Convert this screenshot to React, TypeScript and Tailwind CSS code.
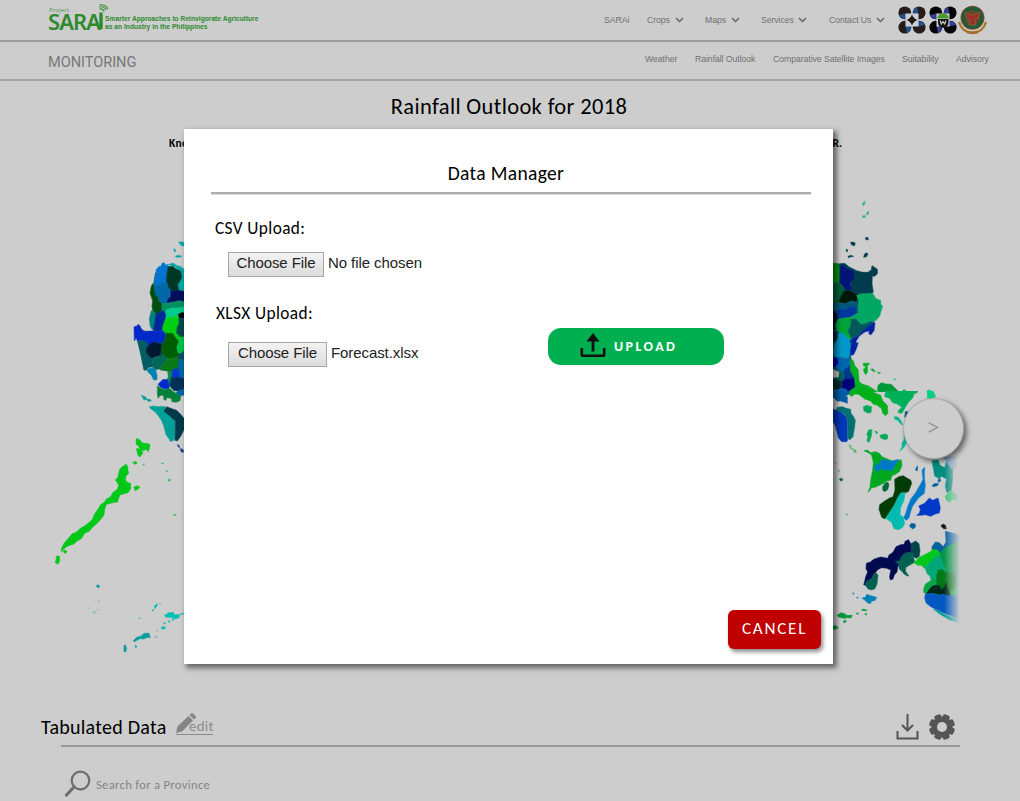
import type { ReactNode } from "react";

type Shape = [fill: string, d: string];

const navItems: { label: string; width: string; chevron: string }[] = [
  { label: "SARAi", width: "w-[43px]", chevron: "" },
  { label: "Crops", width: "w-[58px]", chevron: "w-[36px]" },
  { label: "Maps", width: "w-[56px]", chevron: "w-[34px]" },
  { label: "Services", width: "w-[68px]", chevron: "w-[45px]" },
  { label: "Contact Us", width: "w-[69px]", chevron: "w-[55px]" },
];

const subItems: { label: string; width: string }[] = [
  { label: "Weather", width: "w-[50px]" },
  { label: "Rainfall Outlook", width: "w-[78px]" },
  { label: "Comparative Satellite Images", width: "w-[129px]" },
  { label: "Suitability", width: "w-[54px]" },
  { label: "Advisory", width: "w-[63px]" },
];

const westNorth: Shape[] = [
  ["#06505c", "M366 76L384 78 434 96V466L410 452 396 411 386 392 362 390 344 378 312 386 296 310 286 270 340 276 338 214 346 200 338 150 346 100z"],
  ["#00a8a8", "M416 7l8-2 12 5v8l-12-1zM402 26l5 3-1 7-4-3zM406 49l8-3 10 2v3l-15 1zM383 74l16-5 12 8 10 2 13 10v64l-18-2-4-16 14-22-3-18-14-12-8-4-12-4z"],
  ["#0074d0", "M366 70l7-2 3 7 7-1 -1 34-2 18-10 8-14 4-14-2 3-24 4-12-1-10 8-10 8-2z"],
  ["#003828", "M384 82l14-4 8 8 16 8 3 20-12 20 3 16-16 4-12 6-8-14-2-22 2-20z"],
  ["#0068a8", "M342 136l14 0 10-8 14-2 4 14 8 12v20l-10 8-2 12-16-2-10-8-2-12-10-6z"],
  ["#000f5c", "M392 154l22-4 22 6v30l-20-2-18 6-18 2 4-14 8-8z"],
  ["#004d10", "M340 130l3 22 2 12 8 6 2 12 12 10 1 22-10 6-9 10-8-6-5-24 2-18-8-22 4-22z"],
  ["#009060", "M366 190l14 0 20-4 18-4 18 4v20l-24 4-18-2-12 8-10 2-6-6z"],
  ["#00cc88", "M378 210l16-6 18 0 22-4v20l-18 0-2 14-16 0-8 6-12 4-2-10z"],
  ["#00000c", "M414 224l10-6h12v18l-16-2z"],
  ["#008078", "M334 212l10 4 4 14-2 14-2 28-10-6-4-10-2-20z"],
  ["#002898", "M346 228l10-12 16-4 5 14-3 16-8 16 2 16-14 0-14-4 4-20z"],
  ["#00d010", "M376 238l12-6 26-3 4 18-5 14-2 18 14 14-2 12-18-8-6-14-18-2-16 0 4-22z"],
  ["#004a48", "M416 236l20-1v58l-14-1-12-12 1-18 6-10z"],
  ["#0028c8", "M282 260l8-1 4-6 6 4 3 8 8 8-2 4 20-4 16 0 22-2 8 8 3 12-6 14-16 5-13-3-12 9-9 6-8-10-18-4-8-13-5 8z"],
  ["#005c60", "M292 303l10-2 18 4 2 11-2 16 8 18 12 6-4 14-12 4-2 16-10 1-4-20-6-30-5-20z"],
  ["#001830", "M328 314l12-8 12 2 14 6-2 20-6 14-18 6-10-2-12-16 2-12z"],
  ["#005c00", "M378 280h20l8 12 10 12 0 30-4 20-12 4-16 0-12-10-8-12 2-18 8-16z"],
  ["#00c040", "M420 292l16-2v38l-14 12-8-2-4-16 6-16z"],
  ["#006858", "M342 352l16-4 14-1 12 9-10 14-12 14-14 6-10-8-2-14z"],
  ["#087818", "M382 356l18-3 14 0 0 26-12 10-8 8-34-10 12-18z"],
  ["#0080b0", "M324 386l14-3 8 4 5 18 0 14-10 1-8-16-10-8z"],
  ["#009040", "M383 396l11 1 2 20-9 16-7-8 5-16z"],
  ["#0068a0", "M420 357l14 5v58l-15-8-3-30z"],
  ["#0038d0", "M397 392l8-7 14 7 0 20-14 5-10-5z"],
  ["#0028d0", "M354 433l14-14 14-1 6 15-1 12-12 3-14-7z"],
  ["#003058", "M394 411l14 2 10-2 16 6v38l-18-3-14 0-14-15z"],
  ["#0064a8", "M406 460l10-8 18-6v18l-16 5z"],
  ["#008038", "M352 438l10 5 12 7 14-6 10 10 10 6 14 8-2 14-12 5-12-2-2-10-14-2-2 8-6-2-2-14-10 2-6 8-2-16z"],
  ["#00a098", "M304 465l14 7 4 6 8 0 4 4-8 3-8-7-6 2zM328 500l14-2 14 2 18-1 8 14 24 20-1 50-3 19-14-4-10-14-6-24-8-20-16-22-16-12zM388 600l10-2-4 8z"],
  ["#003848", "M372 514l8-14 18 7 12 4 12 12 10 12v34l-10 20-10 14-7-2 1-58-20-18z"],
  ["#203c88", "M412 614l5 1 2 8-4-2zM420 626l8 1 4 9-7 1z"],
  ["#00c818", "M289 596l8 2 8 10 10 4 8-2 6 4-2 10-7-4-8 3-10 4-6-9-8-5zM290 626l12 2 6 10-8 12-7-6z"],
];

const westSouth: Shape[] = [
  ["#00c818", "M290 26l8 3 8 10 12 2 11 4-1 10-3 10-7-7-8 4-10-6-5-12-5-8zM290 57l12 0 6 14-10 10-3-10zM278 98l10-4 3 6-7 3zM258 102l5 8 1 12 2 8-8 8-2 12 8 8 8 2 0 16-8 12-12 3-12 4-4 10-4 12-8 0-12 3-12 3-4 8-2 8-2 16-12 16-10 10-14 12-8 11-14 6-10 16-14 8-8 8-12 4-10 4-10 8-6 9 0-11 8-16 14-16 10-12 14-6 12-12 12-6 12-10 10-8 8-18 12-18 6-10 12-8 4-8 14-8 6-12 14-10 4-12-4-8-6-8 8-8 2-12 4-14zM282 171l10-4 8 5-7 6-8 4zM74 360l7 4-5 7-7-7zM50 378l8 0 1 14-5 11-8-5z"],
  ["#44bd54", "M384 149l5-3 3 4-3 4-5-2zM364 100l8-1-3 3zM377 121l6 2-2 3zM401 253l5-1 3 3-7 2zM308 103l6-2-2 5z"],
  ["#009ca0", "M168 468l6-4 5 4-3 6zM280 632l10-10 14-4 8-8 15 0 4 13-8-1-12 5-12-1-10 6-6 4zM252 646l4-1 4 10-3 11-5-1zM285 646l5 2-2 6z"],
  ["#00c0b4", "M374 556l12-8 14-1 4 8 15-2-2 10-12 4-10-5-18 0zM343 528l8-7 1 6-8 9zM370 579l8-1-4 4zM385 572l5 2-2 5zM364 592l8-3 5 5-5 4-8-2zM394 568l8 0-2 4zM336 540l6-1-3 5zM420 553l10-4v4z"],
  ["#7fbfc0", "M357 520l6 2-3 3zM294 566l5-4 4 2-4 3zM160 545l6 0 0 4-7 0zM144 535l3-3v4zM172 538l4 1-3 3zM175 510l4 2-3 3zM344 620l10-2-5 6zM350 600l4 2-3 4z"],
];

const eastNorth: Shape[] = [
  ["#005060", "M38 222H56L100 244 154 252 156 312 180 350 160 394 100 446 92 500 106 560 112 590 94 608 62 604 58 566 64 548 38 536z"],
  ["#30b878", "M127 42l4-6 5-2-2 8-4 6zM139 73l3-8 5 0-3 10zM127 78l8-2 2 5-8 2z"],
  ["#003c4c", "M92 157l8-1 6 4-3 8-9-4zM136 143l8-1 1 7-7 1zM79 177l4 2-1 7-4-3zM84 199l8-3 9 3-10 2-6 2zM131 202l2-9 6-5 5 4-4 8zM58 221l16-1 14 11 22 11 18 5 16 0 10-8 2-12 8 5 8 6 1 12-8 9-8-1-1 24 4 24-10 6-24 0-16 2-14-8-10-8 10-14-8-24z"],
  ["#009800", "M38 220l14 0 4 8 3 16-2 34-19 4z"],
  ["#001478", "M60 228l10-2 10 10 20 7 2 20-13 21 8 12-8 5-14-3-6-12-10-9 0-18z"],
  ["#006038", "M38 280l18-2 10 10 8 12-6 18-12 18-18 4z"],
  ["#001808", "M72 302l14-2 14 8 16 7-4 15-10 8-16 0-12 3-18-5 6-16z"],
  ["#00a864", "M110 316l14-5 14 0 20-1 10 16 14 5 1 14 5 3-5 16-4 14-12 14-16 2-12 8-12 4-10-10-9-9-20-3 10-9 16-5 0-20 2-16z"],
  ["#005878", "M48 340l16-1 12 2 18-9 14 4 1 14-18 2-14 8-20-1-16 0z"],
  ["#0038a0", "M54 358l18 0 18-7 18-1 1 16-4 7-13 6-8 6-16 1-14 2-2-18z"],
  ["#001030", "M38 362l8 2 6 14 0 30-6 12-8-2z"],
  ["#00a438", "M54 388l20-4 18-2 8 4-8 22-4 14 2 14 8 12-12 2-12-12-12-6-12-12-4-16z"],
  ["#005858", "M94 387l14 1 14 16 14-3 14-5 12 2-12 12-12 8-14 10-14 12-16 5-6-15-4-8 8-14z"],
  ["#0020a0", "M148 407l14-12 3 5-3 22-10 13-6-5 2-8-14 4-16 12-10 16 2 6 5-2-6 18-8 18-10 2 0-20 6-16-7-7 10-8 14-8 20-20z"],
  ["#002038", "M38 424l12 4 4 16-8 11-8-3z"],
  ["#0098cc", "M54 430l16 0 8 12 10 4 3 20-3 34-10 6-8-2-10-2-14 0-6-12 2-18 6-16 6-12z"],
  ["#0000b8", "M38 502l16 3 4 13-8 11-12 3z"],
  ["#0068b0", "M54 502l14 0 10 4 10-2 2 18-10 14-10 10-16-4-6-12 8-10z"],
  ["#003890", "M70 542l8-8 10-4 4 14 6 24-10 3-16-5z"],
  ["#006058", "M58 544l10 0 4 14-4 20-16-4-12-6v-4l16-2z"],
  ["#002828", "M38 566l14 4 12 4-2 22-10 7-14-4z"],
  ["#000078", "M66 574l10-8 12 2 12-4 12 14 4 14-14 9-14 12-10-15-12-2z"],
  ["#0060b0", "M40 600l14 0 10-5 14 3 10 12 10 5-2 18-12 5-8 0-8-12-10 0-2 10-16-6z"],
  ["#00b020", "M92 506l8 6 4 14 10 12 2 14 1 22 9 8 16 5 14 8 12 8 10 4 8 16 10 18 5 19h-14l-5-16-12-14-16-7-14-5-14-10-10-3-10 3-8 7-14-1-6-3 14-10 14-10-3-28-12-22zM130 520l16-1 3 4-7 2 1 20-6 9-4-6-3-10 8-8-8-3zM152 538l6-2 8 8-5 1zM172 547l10 1-5 3zM136 588l8-1 8 6 13 9 7 7-7 2-10-8-10-8zM130 648l10-4 15 4-2 12h-22z"],
  ["#00b050", "M182 604l14-1 14 1 10 8 16 5 10-6 4-12 6 1 4 12 14 0 8-5 18 2-10 7 12 4 18 2 4 14-10 6-26 4-16 14h-36l-6-14-14-10-10-4-8-14-12-6z"],
  ["#009838", "M174 586l10-8 14 4 16 1 12 12 8 8 3 12-9-1-10-7-18-5-20 6-8-8z"],
  ["#00d084", "M322 602l6-3 9 7 8 12 2 7-24 1zM221 569l4-3 2 4z"],
  ["#007070", "M40 652l10-2 14 4 16 0 2 6H38z"],
];

const eastSouth: Shape[] = [
  ["#00a838", "M336 486L400 470H434V670L400 676 320 640 318 600 336 576z"],
  ["#00b018", "M84 8l12-8h40l14 2 18 8 14 6 6 16 14 14 2 24-8 7-8-8-4-14-14-10-10-2-8-10-18-6-18-14-12-1-10 8z"],
  ["#00a858", "M130 50l10-4 15 4-2 18-10 1-11-6zM146 120l10-1-2 20-7 18-6-4 3-14-4-5zM165 123l8 3-3 6zM180 136l14-4 8 2 2 11-8 4-14-5z"],
  ["#005ca0", "M38 8l14-8h38l-2 12-12 6 6 2 0 20-20-7-10 1-10-11-6 2z"],
  ["#0038b8", "M46 60l12 1 10 8 14 16 1 60-2 10-16 0-10-12-4-16-6-22-6-10v-38z"],
  ["#007070", "M52 52l16-2 8 4 16 4 1 12 8 10 5 12-3 24-4 24-10 10-6-6 0-56-12-18-22-10z"],
  ["#00b058", "M196 8l12-8h86l-2 8-10 4-4 12-14 14-8 14-10 18-12-2 2-8 10-8-14-10-14-4-10-14-14-4z"],
  ["#00d084", "M322 2l16-2 9 20-17 6-8-2z"],
  ["#005878", "M256 64l12 2 6 16-20 0z"],
  ["#00b898", "M222 80l12 1 8 10 6 14-5-2-10-12-8-3zM252 122l6 30 0 10-6 10-12 12 6-14 0-12 6-8z"],
  ["#55b96a", "M88 164l6 4-2 5 8 4 8 4 1 6-5 2-4-9-10-6zM44 218l5 1-2 3zM54 240l5 2-3 4zM76 372l8 1-2 3z"],
  ["#006838", "M58 268l4-4 7 4-3 5-5-1z"],
  ["#00a820", "M132 182l10-2 10 8 14-3 12 5 8 10 14 6 20 8 10-1 14-4 2 18-8 18-12 8-10 4-4 14-12 2-12 8-20 10-14 3-6 10-4 2 6-14 2-22 6-30 2-24-6-22-8-5z"],
  ["#0078c8", "M164 228l12-6 8-12 16-1 10 6 14-4 13-3-9 14-6 8-6 12-12-2-14 0-6-6-10 10-10-5zM306 240l8-8-1 30 3 24-3 24-18 14-8 12-10 14-6 18-4 15-8 8-8-7 7-16 5-18 10-24 14-18 16-28 6-12z"],
  ["#006838", "M188 290l8-12 8-1 3 8-4 14-10 6-5-5z"],
  ["#003c04", "M224 268l12-8 14-3 12 8 10 5 3 10-9 24-12 6-14 8-12 20-10 16-12 18-11 15-10-5-8-24 2-14 14-10 14-9 12-5 6-20z"],
  ["#00bcb0", "M242 309l13-2-3 24-10 22-2 22 10 6 4 20-6 11-12 7-14-3-7-19-10-6-8-6 12-18 14-22 10-22z"],
  ["#0038c8", "M290 376l8-6 3-12-5-10 18-8 14-16 10 7 16-7 2 7 5 22-3 16-12 3-14 7-16-5-12 2z"],
  ["#0060a0", "M268 408l6-8 12 2 0 10-8 5zM336 287l6-6 10-1 4 3-6 5-10 2zM354 271l5-7 3 8-6 6zM286 240l4-10 3-2-1 14z"],
  ["#008c80", "M336 212l18-2 6 16 14 7 4-16 20-8v56l-4 38-14 4-4-20 4-20-16-8-6 7-14-8z"],
  ["#40c878", "M376 318l18-19 6 10 14 8-4 18-8-8-8 4-6 6-10-8z"],
  ["#80a0c8", "M370 200h40l-1 34-16 2-14-22z"],
  ["#181820", "M364 405l7-3 7 6 1 9-8-1-7-6z"],
  ["#000850", "M228 470l14-6 10-1 4-10 10-4 5 10 7 6-3 20 8 16-12 0-16 9-14 10-8 12-2 14-8 9-4 12-8 3-2-8 1-11 3-10-12-6-16-2-12 6-12 16-6 18-8 8-8 6-8-3 4-14 2-10 6-14-5-10 1-16 12-4 10-8 20-7 14 2 8 2 4-10 12-8z"],
  ["#004448", "M273 461l14-8 10 8 3 20-2 18-8 6-10-5-6-18z"],
  ["#006050", "M226 516l12-4 8-15 12-9 16-1 6 12 4 18-16 9-10 6-2 10 10 16-4 0-10-6-6-8-8-6-2-16zM142 572l12-6 8-14 7-3 5 7-3 26-6 14-10 4-12-4-8-14z"],
  ["#0080b8", "M126 624l10-2 4-9 12 4 18 5-5 10-10 1-4 8-8-2-8-8zM98 609l4 0-2 5zM110 622l5 0-2 4z"],
  ["#009838", "M51 676l12-8 12 3 4 5 18 0-4 8-12-1-8 2-16-3zM108 671l6-3 1 5zM38 710l8-4 9 7-8 5-9 0zM70 693l6-3 3 5-7 4zM124 661l6-4 12 4-8 1zM134 672l6-2-2 6z"],
  ["#0060a0", "M336 470l10-14 12 2 12 12 8-14-2-32 18 4 26 8v52l-44 8-20-4-20-8z"],
  ["#009848", "M360 492l10-14 22-14 28-8v120l-24-14-20-16-12-24z"],
  ["#00c818", "M282 518l16-16 16-8 16-8 8-8 14 2 8 9-3 8-14 8-14 20-16 10-8-9-12 0z"],
  ["#00a878", "M314 530l16-12 12-14 16-8 6 14 12 26-2 14-14-7-10 2-2 16 2 18-8 5-8-10-4-16-8-6z"],
  ["#007818", "M348 564l6-24 10-2 10 6 14 4 20 8v36l-16 12-14 6-10-14-16 0-12 4 10-14z"],
  ["#002818", "M318 602l14-12 14-5 14 3 4 10 10-8 4-14 6 20 8 20-8 7-8-4-6-4-8 0-22-5-20 6z"],
  ["#00a840", "M310 600l6-18 16-10 16-4-4 12-10 8-6 8-10 14-6-2z"],
  ["#0058c0", "M316 612l20-2 22 6 10-4 12 4 20 2 20-4v68l-14 0-28-10-26-12-20-10-14-12-4-14z"],
  ["#00a0a0", "M340 658l16 4 20 12 20 8 20 2v14l-26-8-28-16z"],
];

function Region({ shapes, x, y }: { shapes: Shape[]; x: number; y: number }) {
  return (
    <g transform={`translate(${x} ${y}) scale(0.333333)`} strokeLinejoin="round">
      {shapes.map(([fill, d], i) => (
        <path key={i} fill={fill} stroke={fill} strokeWidth="1.600" d={d} />
      ))}
      <g fill="none" stroke="#9ab" strokeOpacity="0.2" strokeWidth="1">
        {shapes.slice(1).map(([, d], i) => (
          <path key={i} d={d} />
        ))}
      </g>
    </g>
  );
}

function RainfallMap() {
  return (
    <svg className="block h-[500px] w-full" viewBox="0 170 1020 500" aria-hidden="true">
      <defs>
        <linearGradient id="fade" x1="0" x2="1" y1="0" y2="0">
          <stop offset="0" stopColor="#cdcdcd" stopOpacity="0" />
          <stop offset="1" stopColor="#cdcdcd" />
        </linearGradient>
        <clipPath id="upper">
          <rect x="0" y="170" width="1020" height="222" />
        </clipPath>
        <clipPath id="lower">
          <rect x="0" y="391" width="1020" height="300" />
        </clipPath>
      </defs>
      <Region shapes={westNorth} x={40} y={240} />
      <Region shapes={westSouth} x={40} y={430} />
      <g clipPath="url(#upper)">
        <Region shapes={eastNorth} x={820} y={190} />
      </g>
      <g clipPath="url(#lower)">
        <Region shapes={eastSouth} x={820} y={390} />
      </g>
      <rect x="944" y="450" width="16" height="180" fill="url(#fade)" />
      <rect x="959.500" y="450" width="30" height="180" fill="#cdcdcd" />
    </svg>
  );
}

function Chevron() {
  return (
    <svg className="h-[6px] w-[9px]" viewBox="0 0 9 6" fill="none" stroke="#666" strokeWidth="1.500">
      <path d="M1 1l3.500 3.500L8 1" />
    </svg>
  );
}

function Petals({ dark, blue, children }: { dark: string; blue: string; children: ReactNode }) {
  return (
    <svg className="h-[28px] w-[28px]" viewBox="0 0 28 28">
      {[0, 90, 180, 270].map((angle) => (
        <g key={angle} transform={`rotate(${angle} 14 14)`}>
          <circle cx="6.800" cy="6.800" r="6.400" fill={dark} />
          <path d="M.8 9A6.400 6.400 0 0011.500 11.200L8 7.500z" fill={blue} />
        </g>
      ))}
      <path fill="#cdd0d2" d="M7.500 7.500h13v13h-13z" />
      {children}
    </svg>
  );
}

function Logos() {
  return (
    <div className="flex h-[30px] items-center">
      <Petals dark="#251c1b" blue="#254f8c">
        <path fill="#201a1a" d="M14 8.500l1.800 3.700 3.700 1.800-3.700 1.800L14 19.500l-1.800-3.700L8.500 14l3.700-1.800z" />
        <circle cx="14" cy="14" r="3" fill="#201a1a" />
      </Petals>
      <div className="ml-[3px] flex">
        <Petals dark="#050508" blue="#343c94">
          <path fill="#151515" d="M9 13h10.500v3.500a5 5 0 01-10.500 0z" />
          <path fill="#4d9a2b" d="M8 12.500C8.500 9 11 7.200 14 7.200s5.500 1.800 6 5.300z" />
          <path d="M11 14.500l1.300 3.500 1.700-2.500 1.700 2.500 1.300-3.500" fill="none" stroke="#ccc" strokeWidth="1.200" />
        </Petals>
      </div>
      <svg className="h-[30px] w-[31px]" viewBox="0 0 31 30">
        <path d="M2 17c2 7 7 10.500 13.500 10.500S27 24 29 17" fill="none" stroke="#a27a28" strokeWidth="2.300" />
        <path d="M4 15c2 7 6 9 11.500 9S25 22 27 15" fill="none" stroke="#d0cdc4" strokeWidth="2" />
        <path d="M10 27.300l5.500 1 5.500-1" fill="none" stroke="#a8662a" strokeWidth="2" />
        <circle cx="15.500" cy="12.800" r="12" fill="#a5453a" />
        <circle cx="15.500" cy="12.800" r="11.200" fill="#1e5c36" />
        <circle cx="15.500" cy="12.800" r="7.500" fill="#66492c" />
        <path d="M8.500 7l5.500 3h3l5.500-3-1 6-4 2 1.500 5h-7l1.500-5-4-2z" fill="#9c2d28" stroke="#a87838" strokeWidth=".5" />
      </svg>
    </div>
  );
}

function Brand() {
  return (
    <div className="flex h-[40px] w-[230px] text-[#2f8a2f]">
      <div className="flex w-[57px] flex-col pt-[6px]">
        <span className="h-[7px] pl-px font-['Open_Sans',sans-serif] text-[6px] leading-[8px] tracking-[0.100px] opacity-80">Project</span>
        <div className="flex">
          <span className="w-[51px] font-['Noto_Sans',sans-serif] text-[22px] leading-[17px] font-semibold tracking-[-0.900px]">SARA</span>
          <svg className="-mt-[9px] -ml-px h-[26px] w-[11px] shrink-0" viewBox="0 0 11 26" fill="none" stroke="#2f8a2f">
            <path d="M3 8.500v16.500" strokeWidth="3.400" />
            <path d="M1.500 5c2-.6 4 .6 4.500 2.500M1.200 3c3.500-.8 6 .8 6.800 3.200M1.500 1C5.500.2 8.800 2 9.800 5" strokeWidth="1.200" />
          </svg>
        </div>
      </div>
      <div className="flex flex-col pt-[15px] font-['Liberation_Sans',sans-serif] text-[6.700px] leading-[8px] font-bold whitespace-nowrap">
        <span>Smarter Approaches to Reinvigorate Agriculture</span>
        <span>as an Industry in the Philippines</span>
      </div>
    </div>
  );
}

function FileField({ button, status }: { button: string; status: string }) {
  return (
    <div className="flex pl-[44px] font-['Liberation_Sans',sans-serif] text-[15px] tracking-[-0.080px] text-[#222]">
      <button
        type="button"
        className={`h-[25px] border border-[#a6a6a6] bg-linear-to-b from-[#f3f3f3] to-[#dcdcdc] pb-[3px] leading-[20px] ${button}`}
      >
        Choose File
      </button>
      <span className="pl-[4px] leading-[22px]">{status}</span>
    </div>
  );
}

function DataManager() {
  return (
    <section
      role="dialog"
      className="absolute top-[129px] left-[184px] flex h-[535px] w-[649px] flex-col bg-white shadow-[3px_3px_5px_1px_rgba(0,0,0,0.5)]"
    >
      <h2 className="mt-[31px] mr-[5px] text-center text-[19.500px] leading-[27px] tracking-[0.350px] text-black">Data Manager</h2>
      <div className="mt-[5px] ml-[27px] h-[2px] w-[600px] bg-[#adadad] shadow-[0_1px_1px_rgba(0,0,0,0.15)]" />
      <label className="mt-[23px] ml-[31px] text-[17.300px] leading-[24px] tracking-[0.400px] text-black">CSV Upload:</label>
      <div className="mt-[11px] h-[25px]">
        <FileField button="w-[96px]" status="No file chosen" />
      </div>
      <div className="mt-[24px] flex h-[90px]">
        <div className="flex w-[364px] flex-col">
          <label className="ml-[32px] text-[17.300px] leading-[25px] tracking-[0.400px] text-black">XLSX Upload:</label>
          <div className="mt-[16px]">
            <FileField button="w-[99px]" status="Forecast.xlsx" />
          </div>
        </div>
        <button type="button" className="mt-[27px] flex h-[37px] w-[176px] items-center rounded-[13px] bg-[#00b050] pl-[32px]">
          <svg className="mb-[2px] h-[25px] w-[26px]" viewBox="0 0 26 25" fill="none" stroke="#111">
            <path d="M1.800 15v6.500a1.300 1.300 0 001.300 1.300h19.800a1.300 1.300 0 001.300-1.300V15" strokeWidth="2.600" />
            <path d="M13 18.500V7" strokeWidth="2.800" />
            <path d="M13 0l6.500 8.500h-13z" fill="#111" stroke="none" />
          </svg>
          <span className="ml-[8px] text-[14px] leading-[20px] font-bold tracking-[2.400px] text-white">UPLOAD</span>
        </button>
      </div>
      <button
        type="button"
        className="mt-auto mr-[12px] mb-[15px] h-[39px] w-[93px] self-end rounded-[6px] bg-[#c00000] pb-[2px] text-[17px] leading-[37px] tracking-[1.800px] text-white shadow-[2px_3px_4px_rgba(0,0,0,0.45)]"
      >
        CANCEL
      </button>
    </section>
  );
}

export default function App() {
  return (
    <div className="relative flex h-[801px] w-[1020px] flex-col overflow-hidden bg-[#cdcdcd] font-[Carlito,Lato,sans-serif]">
      <header className="flex h-[42px] shrink-0 border-b-2 border-[#9c9c9c] pl-[48px]">
        <Brand />
        <nav className="ml-[326px] flex h-[41px] items-center font-['Liberation_Sans',sans-serif] text-[8.700px] tracking-[-0.060px] whitespace-nowrap text-[#707070]">
          {navItems.map((item) => (
            <div key={item.label} className={`flex shrink-0 items-center ${item.width}`}>
              <span className={item.chevron ? `-mr-[8px] shrink-0 ${item.chevron}` : ""}>{item.label}</span>
              {item.chevron && (
                <span className="shrink-0">
                  <Chevron />
                </span>
              )}
            </div>
          ))}
        </nav>
        <div className="mt-[5px]">
          <Logos />
        </div>
      </header>
      <div className="flex h-[39px] shrink-0 border-b-2 border-[#a4a4a4] pl-[48px]">
        <h1 className="w-[597px] font-[Roboto,sans-serif] text-[14.600px] leading-[41px] tracking-[-0.050px] text-[#777]">MONITORING</h1>
        <nav className="flex font-['Liberation_Sans',sans-serif] text-[8.700px] leading-[35px] tracking-[-0.060px] whitespace-nowrap text-[#707070]">
          {subItems.map((item) => (
            <span key={item.label} className={`shrink-0 ${item.width}`}>
              {item.label}
            </span>
          ))}
        </nav>
      </div>
      <h2 className="mt-[10px] mr-[2px] text-center text-[22.500px] leading-[31px] tracking-[0.350px] whitespace-nowrap text-black">Rainfall Outlook for 2018</h2>
      <p className="mt-[13px] mr-[178px] ml-[169px] flex h-[16px] justify-between text-[11.500px] leading-[16px] font-bold text-black">
        <span className="tracking-[0.300px]">Kno</span>
        <span>R.</span>
      </p>
      <main className="mt-[19px] h-[500px] shrink-0">
        <RainfallMap />
      </main>
      <button
        type="button"
        className="absolute top-[398px] left-[903px] h-[61px] w-[61px] rounded-full border border-[#aaa] bg-[#cdcdcd] pb-[2px] shadow-[3px_3px_5px_rgba(0,0,0,0.5)]"
      >
        <svg className="mx-auto h-[11px] w-[11px]" viewBox="0 0 11 11" fill="none" stroke="#888" strokeWidth="1.100">
          <path d="M.5 .8l9 4.700-9 4.700" />
        </svg>
      </button>
      <section className="flex flex-col pt-[40px]">
        <div className="flex h-[33px] items-center pr-[65px] pl-[41px]">
          <h3 className="w-[135px] text-[20px] leading-[28px] tracking-[0.250px] whitespace-nowrap text-black">Tabulated Data</h3>
          <a className="mb-[5px] flex h-[22px] w-[37px] items-end border-b border-[#8c8c8c] text-[#8c8c8c]">
            <svg className="mb-px h-[20px] w-[20px] shrink-0" viewBox="0 0 20 20" fill="#858585">
              <path d="M0 20l1.500-6.500L12.500 3l4.500 4.500L6 18.500zM13.500 2l1.500-1.500a1.500 1.500 0 012 0l2.500 2.500a1.500 1.500 0 010 2L18 6.500z" />
            </svg>
            <span className="-ml-[7px] text-[15px] leading-[15px] tracking-[0.200px]">edit</span>
          </a>
          <div className="ml-auto flex items-center gap-[10px]">
            <svg className="h-[26px] w-[23px]" viewBox="0 0 23 26" fill="none" stroke="#555" strokeWidth="2">
              <path d="M1.500 17v7.500h20V17M11.500 0v16M6 11l5.500 5.500L17 11" />
            </svg>
            <svg className="h-[26px] w-[26px]" viewBox="0 0 26 26">
              <g fill="#555">
                <circle cx="13" cy="13" r="10.500" />
                {[0, 45, 90, 135, 180, 225, 270, 315].map((angle) => (
                  <rect key={angle} x="9.500" y="0" width="7" height="7" rx="2" transform={`rotate(${angle + 22.5} 13 13)`} />
                ))}
              </g>
              <circle cx="13" cy="13" r="5" fill="#cdcdcd" />
            </svg>
          </div>
        </div>
        <div className="mt-[2px] ml-[61px] h-[2px] w-[899px] bg-[#979797]" />
        <div className="mt-[23px] flex items-start pl-[64px]">
          <svg className="h-[27px] w-[27px]" viewBox="0 0 27 27" fill="none" stroke="#6e6e6e">
            <circle cx="16.500" cy="10.500" r="8.800" strokeWidth="2.200" />
            <path d="M10 17l-7.500 8" strokeWidth="3.200" strokeLinecap="round" />
          </svg>
          <span className="mt-[5px] ml-[5px] text-[12.700px] leading-[20px] tracking-[0.280px] text-[#858585]">Search for a Province</span>
        </div>
      </section>
      <DataManager />
    </div>
  );
}
